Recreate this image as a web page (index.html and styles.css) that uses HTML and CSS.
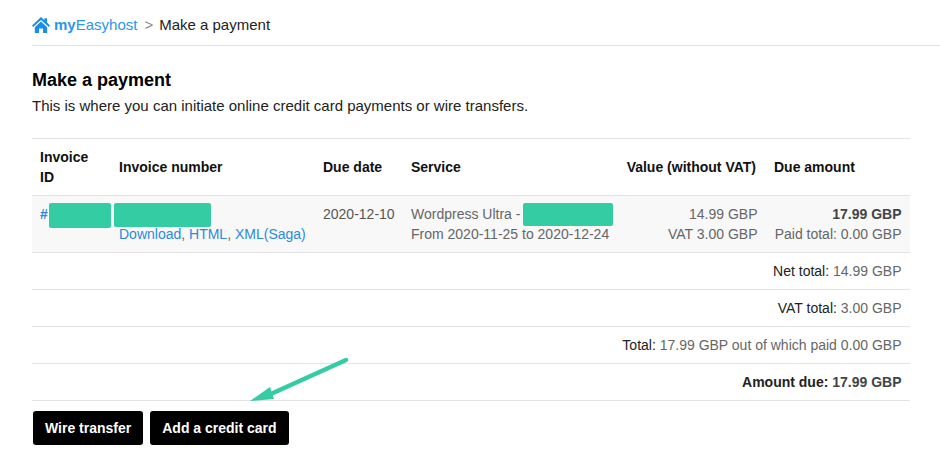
FILE: index.html
```html
<!DOCTYPE html>
<html lang="en">
<head>
  <meta charset="UTF-8" />
  <title>Make a payment - myEasyhost</title>
  <link rel="stylesheet" href="styles.css">
</head>
<body>

  <nav class="breadcrumb">
    <a class="home" href="#">
      <svg class="home-icon" viewBox="0 0 18 16" width="18" height="16">
        <path d="M9 0 0 8.4l1.2 1.5L9 3l7.8 6.9L18 8.4l-3-2.8V1.2h-2.6v2L9 0Z" fill="#1b8fe8"/>
        <path d="M2.8 10.2 9 4.5l6.2 5.7V16h-4.2v-4.4H7V16H2.8v-5.8Z" fill="#1b8fe8"/>
      </svg>
      <span><b>my</b>Easyhost</span>
    </a>
    <span class="sep">&gt;</span>
    <span>Make a payment</span>
  </nav>

  <main class="content">
    <h1>Make a payment</h1>
    <p class="intro">This is where you can initiate online credit card payments or wire transfers.</p>

    <table class="invoice">
      <colgroup>
        <col class="col-id"><col class="col-number"><col class="col-date">
        <col class="col-service"><col class="col-value"><col class="col-due">
      </colgroup>
      <thead>
        <tr>
          <th>Invoice ID</th>
          <th>Invoice number</th>
          <th>Due date</th>
          <th>Service</th>
          <th>Value (without VAT)</th>
          <th>Due amount</th>
        </tr>
      </thead>
      <tbody>
        <tr class="item">
          <td class="nowrap id-cell"><a href="#"><b>#</b></a><span class="redact redact-id"></span></td>
          <td class="nowrap">
            <span class="redact redact-number"></span><br>
            <a href="#">Download</a>, <a href="#">HTML</a>, <a href="#">XML(Saga)</a>
          </td>
          <td>2020-12-10</td>
          <td class="nowrap">Wordpress Ultra - <span class="redact redact-service"></span><br>From 2020-11-25 to 2020-12-24</td>
          <td class="right">14.99 GBP<br>VAT 3.00 GBP</td>
          <td class="right"><b>17.99 GBP</b><br>Paid total: 0.00 GBP</td>
        </tr>
        <tr class="sum"><td colspan="6"><span class="label">Net total:</span> 14.99 GBP</td></tr>
        <tr class="sum"><td colspan="6"><span class="label">VAT total:</span> 3.00 GBP</td></tr>
        <tr class="sum"><td colspan="6"><span class="label">Total:</span> 17.99 GBP out of which paid 0.00 GBP</td></tr>
        <tr class="sum"><td colspan="6"><b><span class="label">Amount due:</span> 17.99 GBP</b></td></tr>
      </tbody>
    </table>

    <div class="actions">
      <button>Wire transfer</button>
      <button>Add a credit card</button>
    </div>
  </main>

  <!-- annotation drawn on top of the screenshot -->
  <svg class="arrow" viewBox="0 0 110 50" width="110" height="50">
    <path d="M105 4 32 37" stroke="#33cca3" stroke-width="4.5" stroke-linecap="round" fill="none"/>
    <path d="M9 45 29 31 33 43Z" fill="#33cca3"/>
  </svg>

</body>
</html>
```

FILE: styles.css
```css
* {
  box-sizing: border-box;
  margin: 0;
  padding: 0;
}

body {
  background: #fff;
  color: #222;
  font-family: 'Liberation Sans', Arial, sans-serif;
  font-size: 15px;
  line-height: 20px;
}

a {
  color: #2b8ae0;
  text-decoration: none;
}

.breadcrumb {
  display: flex;
  align-items: center;
  height: 46px;
  margin-left: 32px;
  padding-top: 5px;
  border-bottom: 1px solid #e2e2e2;
}

.home {
  display: flex;
  align-items: center;
  color: #2b96ea;
}

.home-icon {
  margin-right: 4px;
}

.sep {
  margin: 0 6px 0 7px;
  color: #888;
}

.content {
  width: 878px;
  margin-left: 32px;
}

h1 {
  margin-top: 23px;
  color: #000;
  font-size: 18px;
  line-height: 22px;
}

.intro {
  margin-top: 5px;
  margin-bottom: 22px;
}

.invoice {
  width: 100%;
  table-layout: fixed;
  border-collapse: collapse;
  border-top: 1px solid #e2e2e2;
  font-size: 14px;
}

.col-id { width: 79px; }
.col-number { width: 204px; }
.col-date { width: 88px; }
.col-service { width: 215px; }
.col-value { width: 148px; }
.col-due { width: 144px; }

th {
  height: 57px;
  padding: 0 8px;
  color: #111;
  text-align: left;
  border-bottom: 1px solid #e2e2e2;
}

th:nth-child(5) {
  padding-right: 10px;
  padding-left: 0;
  text-align: right;
}

td {
  padding: 0 8px;
  color: #666;
  border-bottom: 1px solid #e2e2e2;
}

.nowrap {
  white-space: nowrap;
}

.item td {
  height: 57px;
  background: #f8f8f8;
  vertical-align: middle;
}

.item td.id-cell {
  padding-top: 8px;
  vertical-align: top;
}

.item td:nth-child(3) {
  padding-bottom: 20px;
  color: #555;
}

.item b {
  color: #444;
}

.item a b {
  color: inherit;
}

.right {
  text-align: right;
}

.item .right,
.sum td {
  padding-right: 8.5px;
}

.sum td {
  height: 37px;
  text-align: right;
}

.sum .label {
  color: #222;
}

.sum b {
  color: #444;
}

.redact {
  display: inline-block;
  height: 24px;
  margin-top: -1px;
  margin-bottom: -4px;
  border-radius: 2px;
  background: #33cca3;
  vertical-align: top;
}

.redact-id {
  width: 62px;
  height: 25px;
  margin-left: 1px;
}

.redact-number {
  width: 97px;
  margin-left: -5px;
}

.redact-service {
  width: 90px;
  height: 23px;
  margin-left: -1px;
}

.actions {
  display: flex;
  gap: 7px;
  margin-top: 10px;
  padding-left: 1px;
}

button {
  height: 34px;
  padding: 0 12px;
  border: none;
  border-radius: 3px;
  background: #000;
  color: #fff;
  font-family: inherit;
  font-size: 14px;
  font-weight: bold;
}

.arrow {
  position: absolute;
  left: 241px;
  top: 356px;
}
```
